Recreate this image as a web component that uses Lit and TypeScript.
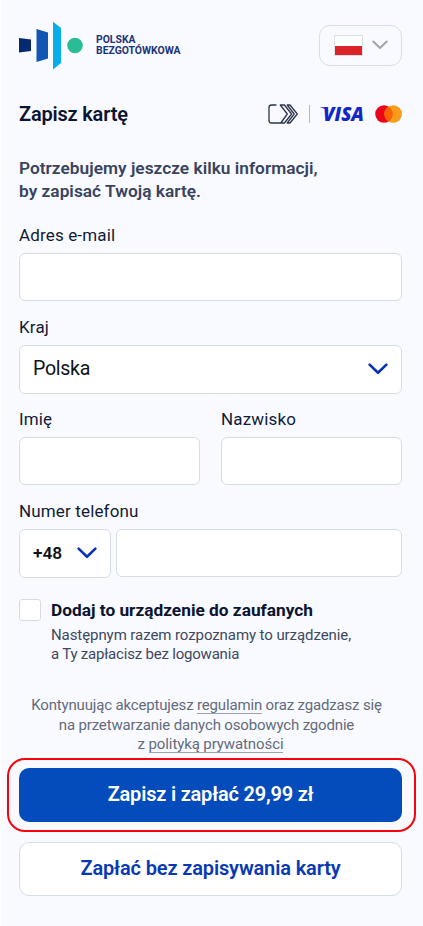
import { LitElement, html, css } from "lit";
import { customElement, property } from "lit/decorators.js";

@customElement("chevron-icon")
class ChevronIcon extends LitElement {
  static styles = css`
    :host { display: block; width: 20px; height: 12px; flex: none; }
    svg { display: block; width: 100%; height: 100%; overflow: visible; }
    path { fill: none; stroke: currentColor; stroke-width: 2.6; stroke-linecap: round; stroke-linejoin: round; }
  `;
  render() {
    return html`<svg viewBox="0 0 20 12"><path d="M1.6 1.6 L10 9.8 L18.4 1.6" /></svg>`;
  }
}

@customElement("form-field")
class FormField extends LitElement {
  @property() label = "";
  static styles = css`
    :host { display: block; min-width: 0; }
    .label { height: 22px; line-height: 22px; margin-bottom: 7px; font-size: 17px; letter-spacing: 0.15px; color: #111a35; white-space: nowrap; }
  `;
  render() {
    return html`<div class="label">${this.label}</div><slot></slot>`;
  }
}

@customElement("app-root")
class AppRoot extends LitElement {
  static styles = css`
    :host { display: block; font-family: Roboto, "Noto Sans", sans-serif; }
    * { box-sizing: border-box; }
    .page { width: 423px; height: 926px; overflow: hidden; background: #f9faff; border-left: 1px solid #fff; padding: 21px 21px 0 18px; }
    .line { display: block; white-space: nowrap; }
    svg { display: block; }
    .top { display: flex; justify-content: space-between; height: 50px; }
    .brand { display: flex; }
    .brand-name { margin: 13px 0 0 13px; font-weight: 700; font-size: 10.4px; line-height: 11.4px; color: #1c3478; }
    .lang { display: flex; align-items: center; width: 83px; height: 41px; margin-top: 4px; padding: 0 0 1px 14px; border: 1.5px solid #d7deea; border-radius: 11px; }
    .flag { width: 29px; height: 21px; border: 1px solid #dcdfe5; background: linear-gradient(#fff 50%, #dc2428 50%); margin-right: 9px; }
    .lang chevron-icon { width: 16px; height: 10px; color: #a3a5aa; }
    .title-row { display: flex; align-items: center; justify-content: space-between; height: 30px; margin-top: 28px; }
    h1 { margin: 0; font-size: 20px; font-weight: 600; letter-spacing: -0.2px; line-height: 28px; color: #0b1430; }
    .cards { display: flex; align-items: center; }
    .sep { width: 1.5px; height: 18px; background: #b5b8c0; margin: 0 9px 0 10px; }
    .visa { width: 46px; height: 28px; margin-right: 10px; }
    .visa text { font: italic 800 19px "Open Sans", sans-serif; fill: #1226c9; }
    .intro { margin: 28px 0 0; font-size: 17.3px; letter-spacing: 0.02px; line-height: 23px; font-weight: 600; color: #38445d; }
    .field { margin-top: 15px; }
    .first { margin-top: 21px; }
    .box { height: 48px; border: 1.5px solid #d6dce8; border-radius: 6px; background: #fff; }
    .select { height: 49px; display: flex; align-items: center; justify-content: space-between; padding: 0 13px 2px; color: #101318; }
    .select chevron-icon { color: #0932b5; }
    .country { font-size: 19.6px; letter-spacing: -0.3px; }
    .pair { display: grid; grid-template-columns: 181px 181px; column-gap: 21px; margin-top: 14px; }
    .phone { display: grid; grid-template-columns: 92px 1fr; column-gap: 5px; }
    .prefix { font-size: 17.3px; font-weight: 600; }
    .trust { display: grid; grid-template-columns: 22px 1fr; column-gap: 10px; margin-top: 21px; }
    .check { width: 22px; height: 22px; border: 1.5px solid #d9dbde; border-radius: 3px; background: #fff; }
    .trust-title { font-size: 17.3px; line-height: 22px; font-weight: 700; color: #0b1430; }
    .trust-note { margin-top: 5px; font-size: 15px; line-height: 18.5px; color: #3d4860; }
    .note-lead { letter-spacing: -0.08px; }
    .note-tail { letter-spacing: -0.2px; }
    .legal { margin: 33px 0 0; padding-right: 8px; text-align: center; font-size: 15px; letter-spacing: -0.16px; line-height: 19.6px; color: #636b7c; }
    .legal-tail { padding-left: 8px; letter-spacing: -0.1px; }
    .link { border-bottom: 1px solid #9aa1b0; display: inline-block; line-height: 16px; }
    .highlight { margin: 3px -14px 0 -12px; height: 74px; padding: 8px 12px 0 10px; border: 2px solid #f5040b; border-radius: 18px; }
    .btn { display: block; width: 383px; height: 54px; margin: 0; padding: 0 0 2px; border-radius: 10px; text-align: center; font: 600 20px/50px Roboto, sans-serif; letter-spacing: -0.14px; white-space: nowrap; }
    .primary { border: 0; background: #044bbb; color: #fff; letter-spacing: -0.2px; }
    .secondary { margin-top: 10px; border: 1.5px solid #d6dce8; background: #fff; color: #0839b4; }
  `;

  renderLogo() {
    return html`<svg width="64" height="50" viewBox="19 21 64 50">
      <path d="M19 38 L31 39.4 V51 L19 52.6Z" fill="#052a70" />
      <path d="M36.5 29 L48 32.6 V58.4 L36.5 62Z" fill="#1056b2" />
      <path d="M53 21.8 L61 28 V63 L53 69.4Z" fill="#07aeea" />
      <circle cx="75" cy="45.5" r="7.8" fill="#2abc94" />
    </svg>`;
  }

  renderClickToPay() {
    return html`<svg width="31" height="20" viewBox="268 104 31 20" fill="none" stroke="#2b3549" stroke-width="1.3" stroke-linejoin="round" stroke-linecap="round">
      <path d="M276 105 H271.5 Q269 105 269 107.5 V120.5 Q269 123 271.5 123 H280.8 L287.3 114 L280.3 105 H284.4 L291.6 114 L284.4 123 H280.8" />
      <path d="M287.2 105 H290 L297.3 114 L290 123 H287.2 L294.2 114 Z" />
    </svg>`;
  }

  renderMastercard() {
    return html`<svg width="27" height="18" viewBox="0 0 27 18">
      <circle cx="9" cy="9" r="8.8" fill="#ea0619" />
      <circle cx="18.2" cy="9" r="8.8" fill="#f99c1c" />
      <path d="M13.6 1.5 A8.8 8.8 0 0 1 13.6 16.5 A8.8 8.8 0 0 1 13.6 1.5Z" fill="#fa6203" />
    </svg>`;
  }

  render() {
    return html`
      <main class="page">
        <header class="top">
          <div class="brand">
            ${this.renderLogo()}
            <div class="brand-name"><span class="line">POLSKA</span><span class="line">BEZGOTÓWKOWA</span></div>
          </div>
          <div class="lang"><span class="flag"></span><chevron-icon></chevron-icon></div>
        </header>
        <div class="title-row">
          <h1>Zapisz kartę</h1>
          <div class="cards">
            ${this.renderClickToPay()}
            <span class="sep"></span>
            <svg class="visa" viewBox="0 0 46 28"><path d="M0.5 7.2 H8 L9.5 11 Q6 8.2 0.5 7.2Z" fill="#1226c9" /><text x="4" y="21" textLength="41" lengthAdjust="spacingAndGlyphs">VISA</text></svg>
            ${this.renderMastercard()}
          </div>
        </div>
        <p class="intro"><span class="line">Potrzebujemy jeszcze kilku informacji,</span><span class="line">by zapisać Twoją kartę.</span></p>
        <form-field class="field first" label="Adres e-mail"><div class="box"></div></form-field>
        <form-field class="field" label="Kraj">
          <div class="box select"><span class="country">Polska</span><chevron-icon></chevron-icon></div>
        </form-field>
        <div class="field pair">
          <form-field label="Imię"><div class="box"></div></form-field>
          <form-field label="Nazwisko"><div class="box"></div></form-field>
        </div>
        <form-field class="field" label="Numer telefonu">
          <div class="phone">
            <div class="box select"><span class="prefix">+48</span><chevron-icon></chevron-icon></div>
            <div class="box"></div>
          </div>
        </form-field>
        <div class="trust">
          <span class="check"></span>
          <div>
            <div class="trust-title line">Dodaj to urządzenie do zaufanych</div>
            <div class="trust-note"><span class="line note-lead">Następnym razem rozpoznamy to urządzenie,</span><span class="line note-tail">a Ty zapłacisz bez logowania</span></div>
          </div>
        </div>
        <p class="legal">
          <span class="line">Kontynuując akceptujesz <span class="link">regulamin</span> oraz zgadzasz się</span>
          <span class="line">na przetwarzanie danych osobowych zgodnie</span>
          <span class="line legal-tail">z <span class="link">polityką prywatności</span></span>
        </p>
        <div class="highlight"><button class="btn primary">Zapisz i zapłać 29,99 zł</button></div>
        <button class="btn secondary">Zapłać bez zapisywania karty</button>
      </main>
    `;
  }
}
